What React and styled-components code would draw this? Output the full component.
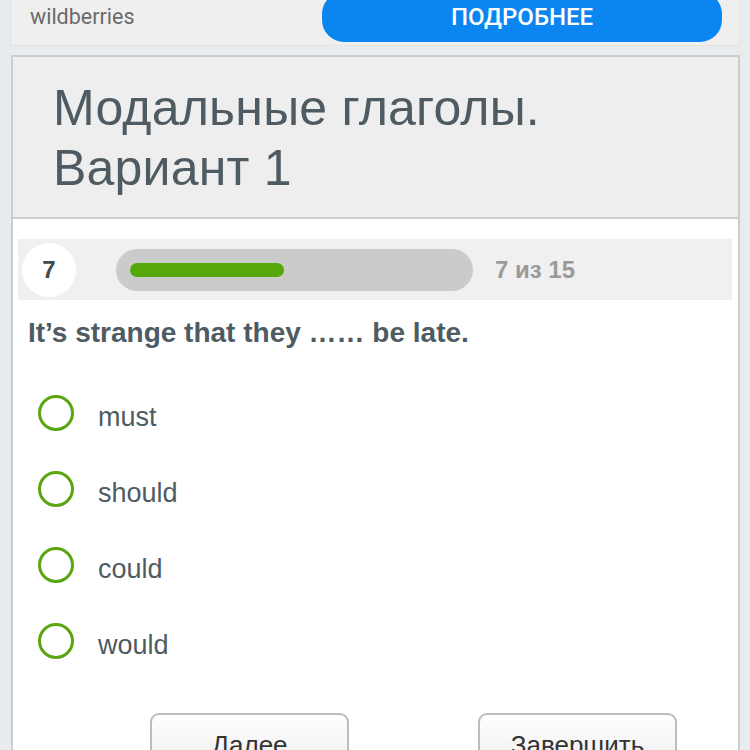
import React from "react";
import styled, { createGlobalStyle } from "styled-components";

const Global = createGlobalStyle`
  html, body { margin: 0; padding: 0; background: #e9ecee; overflow: hidden; }
  body { font-family: "Liberation Sans", Arial, sans-serif; }
  #root { height: 750px; }
`;

const Page = styled.div`
  display: flex;
  flex-direction: column;
  height: 750px;
  overflow: hidden;
`;

const Banner = styled.div`
  margin: -13px 10px 0 10px;
  height: 59px;
  box-sizing: border-box;
  background: #efefef;
  border: 1px solid #e3e3e3;
  display: flex;
  align-items: center;
  justify-content: space-between;
  padding: 0 17px 0 19px;
  flex-shrink: 0;
`;

const Brand = styled.span`
  font-family: Roboto, "Liberation Sans", sans-serif;
  font-size: 21.5px;
  color: #6a6a6a;
`;

const MoreButton = styled.button`
  width: 400px;
  height: 50px;
  border: none;
  border-radius: 22px;
  background: #0b86f1;
  color: #fff;
  font-family: Roboto, "Liberation Sans", sans-serif;
  font-size: 24px;
  font-weight: 500;
  padding-top: 0;
  margin-top: 1px;
`;

const Card = styled.div`
  margin: 9px 10px 0 11px;
  border: 2px solid #cdcdcd;
  background: #fff;
  flex: 1;
  display: flex;
  flex-direction: column;
`;

const Header = styled.div`
  background: #eeeeee;
  border-bottom: 2px solid #cdcdcd;
  padding: 21px 20px 19px 40px;
`;

const Title = styled.h1`
  margin: 0;
  font-weight: 400;
  font-size: 50px;
  line-height: 60px;
  color: #4f5b62;
  letter-spacing: 0.2px;
`;

const Body = styled.div`
  padding: 20px 6px 0 5px;
  display: flex;
  flex-direction: column;
`;

const ProgressRow = styled.div`
  height: 61px;
  background: #f0f0f0;
  display: flex;
  align-items: center;
  padding-left: 4px;
`;

const Number = styled.div`
  width: 54px;
  height: 54px;
  border-radius: 50%;
  background: #fff;
  display: flex;
  align-items: center;
  justify-content: center;
  font-weight: 700;
  font-size: 24px;
  color: #3f4a50;
`;

const Track = styled.div`
  margin-left: 40px;
  width: 357px;
  height: 42px;
  border-radius: 21px;
  background: #cbcbcb;
  display: flex;
  align-items: center;
  padding-left: 14px;
  box-sizing: border-box;
`;

const Fill = styled.div`
  height: 14px;
  border-radius: 7px;
  background: #56a70b;
`;

const Count = styled.span`
  margin-left: 22px;
  font-weight: 700;
  font-size: 24px;
  color: #9a9a9a;
`;

const Question = styled.div`
  margin: 17px 0 0 10px;
  font-weight: 700;
  font-size: 28px;
  line-height: 32px;
  color: #4f5b62;
`;

const Options = styled.div`
  margin-top: 26px;
  display: flex;
  flex-direction: column;
`;

const Option = styled.label`
  height: 76px;
  display: flex;
  align-items: center;
  padding-left: 20px;
  font-size: 27px;
  color: #4f5b62;
`;

const Radio = styled.span`
  width: 30px;
  height: 30px;
  border: 3px solid #5aa510;
  border-radius: 50%;
  margin-right: 24px;
  flex-shrink: 0;
`;

const OptionText = styled.span`
  margin-top: 8px;
`;

const ButtonRow = styled.div`
  margin-top: 34px;
  display: flex;
  gap: 129px;
  padding-left: 132px;
`;

const ActionButton = styled.button`
  width: 199px;
  height: 60px;
  border: 2px solid #bdbdbd;
  border-radius: 9px;
  background: linear-gradient(#ffffff, #ececec);
  font-family: "Liberation Sans", Arial, sans-serif;
  font-size: 26px;
  color: #333;
  padding-top: 6px;
`;

const options = ["must", "should", "could", "would"];

export default function App() {
  return (
    <Page>
      <Global />
      <Banner>
        <Brand>wildberries</Brand>
        <MoreButton>ПОДРОБНЕЕ</MoreButton>
      </Banner>
      <Card>
        <Header>
          <Title>
            Модальные глаголы.
            <br />
            Вариант 1
          </Title>
        </Header>
        <Body>
          <ProgressRow>
            <Number>7</Number>
            <Track>
              <Fill style={{ width: `${(7 / 15) * 331}px` }} />
            </Track>
            <Count>7 из 15</Count>
          </ProgressRow>
          <Question>It’s strange that they …… be late.</Question>
          <Options>
            {options.map((o) => (
              <Option key={o}>
                <Radio />
                <OptionText>{o}</OptionText>
              </Option>
            ))}
          </Options>
          <ButtonRow>
            <ActionButton>Далее</ActionButton>
            <ActionButton>Завершить</ActionButton>
          </ButtonRow>
        </Body>
      </Card>
    </Page>
  );
}
